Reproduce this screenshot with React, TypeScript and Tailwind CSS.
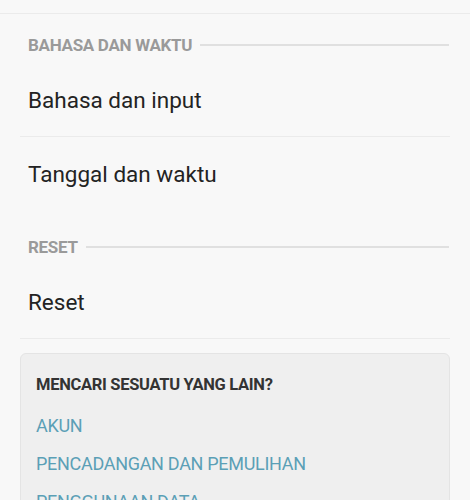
const font = { fontFamily: 'Roboto, "Noto Sans", sans-serif' }

function SectionHeader({ title, pt }: { title: string; pt: string }) {
  return (
    <div className={`flex items-center gap-2 px-7 ${pt} pb-[8px] pr-[21px]`}>
      <span className="text-[17px] font-bold leading-5 tracking-[-0.3px] text-[#9a9a9a]">{title}</span>
      <div className="h-[2px] flex-1 bg-[#e0e0e0]" />
    </div>
  )
}

function Item({ label, divider }: { label: string; divider?: boolean }) {
  return (
    <div className={`mx-5 flex h-[74px] items-center px-2 ${divider ? 'border-b border-[#ebebeb]' : ''}`}>
      <span className="text-[22.5px] leading-6 text-[#232323]">{label}</span>
    </div>
  )
}

export default function App() {
  const links = ['AKUN', 'PENCADANGAN DAN PEMULIHAN', 'PENGGUNAAN DATA']
  return (
    <div className="h-[500px] w-[470px] overflow-hidden bg-[#f8f8f8]" style={font}>
      <div className="h-[14px] border-b border-[#ebebeb]" />
      <SectionHeader title="BAHASA DAN WAKTU" pt="pt-[21px]" />
      <Item label="Bahasa dan input" divider />
      <Item label="Tanggal dan waktu" />
      <SectionHeader title="RESET" pt="pt-[26px]" />
      <Item label="Reset" divider />
      <div className="mx-5 mt-[14px] rounded-md border border-[#e4e4e4] bg-[#efefef] pl-[15px] pr-4 pt-[19px] pb-4">
        <div className="text-[16.5px] font-bold leading-6 tracking-[-0.3px] text-[#333333]">MENCARI SESUATU YANG LAIN?</div>
        <div className="mt-[17px] flex flex-col gap-[14px]">
          {links.map(l => (
            <div key={l} className="text-[18px] leading-6 tracking-[-0.3px] text-[#5b9fb6]">{l}</div>
          ))}
        </div>
      </div>
    </div>
  )
}
